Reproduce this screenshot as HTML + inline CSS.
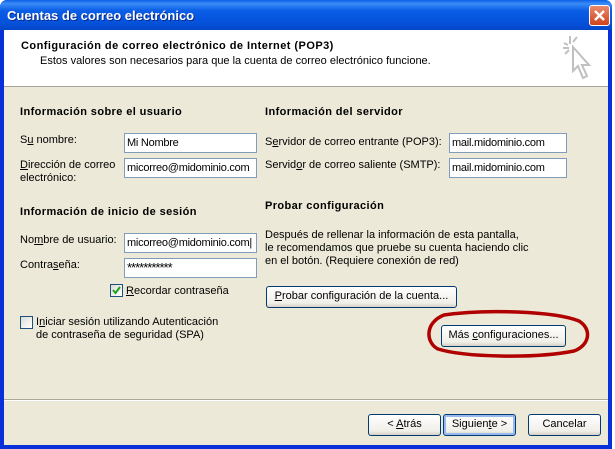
<!DOCTYPE html>
<html><head><meta charset="utf-8"><style>
*{margin:0;padding:0;box-sizing:border-box}
body{width:615px;height:449px;overflow:hidden;background:#fff;font-family:"Liberation Sans",sans-serif;font-size:11px;color:#000;position:relative}
.a{position:absolute;white-space:nowrap;line-height:13px}
.b{font-weight:bold;letter-spacing:0.4px}
.win{position:absolute;left:0;top:0;width:612px;height:449px;background:#0831d9;border-radius:7px 7px 0 0}
.title{position:absolute;left:0;top:0;width:612px;height:30px;border-radius:7px 7px 0 0;background:linear-gradient(#0a5fe8 0%,#3b8cf7 12%,#0b5ee6 35%,#0654de 70%,#0447c8 100%)}
.body{position:absolute;left:4px;top:30px;width:604px;height:415px;background:#ece9d8}
.hdr{position:absolute;left:4px;top:30px;width:604px;height:57px;background:#fff;border-bottom:1px solid #a6a39a}
.in{position:absolute;height:20px;background:#fff;border:1px solid #7f9db9;padding:3px 0 0 2px;line-height:13px;font-size:11px;letter-spacing:-0.25px;white-space:nowrap;overflow:hidden}
.btn{position:absolute;height:22px;border:1px solid #003c74;border-radius:3px;background:linear-gradient(#fff,#f0efe8 80%,#d6d0c5);text-align:center;line-height:19px}
.cb{position:absolute;width:13px;height:13px;border:1px solid #1c5180;background:linear-gradient(135deg,#dcdcd6,#fff)}
u{text-decoration:underline}
</style></head><body>
<div class="win"></div>
<div class="title"></div>
<div class="a" style="left:7px;top:9px;font-size:13px;font-weight:bold;color:#fff;text-shadow:1px 1px #0a2a8a">Cuentas de correo electrónico</div>
<div style="position:absolute;left:589px;top:5px;width:21px;height:21px;border:1px solid #fff;border-radius:3px;background:linear-gradient(#e98a6c,#d0431c)"><svg width="19" height="19" style="position:absolute;left:0;top:0"><path d="M5 5L14 14M14 5L5 14" stroke="#fff" stroke-width="2.4"/></svg></div>
<div class="body"></div>
<div class="hdr"></div>
<div class="a b" style="left:21px;top:40px;letter-spacing:0.45px">Configuración de correo electrónico de Internet (POP3)</div>
<div class="a" style="left:40px;top:55px">Estos valores son necesarios para que la cuenta de correo electrónico funcione.</div>
<svg style="position:absolute;left:562px;top:34px" width="32" height="50"><g stroke="#c0c0c0" stroke-width="2" fill="none"><path d="M8 2V10M2 9L6 11M15 3L11 8M1 14H7M3 20L7 16"/><path d="M11 13L11 37L16 32L21 44L25 42L20 31L27 31Z" fill="#fff"/></g></svg>

<div class="a b" style="left:20px;top:106px">Información sobre el usuario</div>
<div class="a" style="left:20px;top:134px">S<u>u</u> nombre:</div>
<div class="in" style="left:124px;top:133px;width:133px">Mi Nombre</div>
<div class="a" style="left:20px;top:159px"><u>D</u>irección de correo<br>electrónico:</div>
<div class="in" style="left:124px;top:158px;width:133px">micorreo@midominio.com</div>
<div class="a b" style="left:20px;top:206px">Información de inicio de sesión</div>
<div class="a" style="left:20px;top:234px">No<u>m</u>bre de usuario:</div>
<div class="in" style="left:124px;top:233px;width:133px">micorreo@midominio.com|</div>
<div class="a" style="left:20px;top:259px">Contra<u>s</u>eña:</div>
<div class="in" style="left:124px;top:258px;width:133px;font-size:13px;letter-spacing:-1px;padding-top:2px">***********</div>
<div class="cb" style="left:110px;top:284px"><svg width="11" height="11"><path d="M2 5L4.5 8L9 2" stroke="#21a121" stroke-width="2" fill="none"/></svg></div>
<div class="a" style="left:126px;top:285px"><u>R</u>ecordar contraseña</div>
<div class="cb" style="left:20px;top:316px"></div>
<div class="a" style="left:36px;top:316px">I<u>n</u>iciar sesión utilizando Autenticación<br>de contraseña de seguridad (SPA)</div>

<div class="a b" style="left:265px;top:106px">Información del servidor</div>
<div class="a" style="left:265px;top:136px">S<u>e</u>rvidor de correo entrante (POP3):</div>
<div class="in" style="left:449px;top:133px;width:118px">mail.midominio.com</div>
<div class="a" style="left:265px;top:159px">Servid<u>o</u>r de correo saliente (SMTP):</div>
<div class="in" style="left:449px;top:158px;width:118px">mail.midominio.com</div>
<div class="a b" style="left:265px;top:200px">Probar configuración</div>
<div class="a" style="left:265px;top:229px">Después de rellenar la información de esta pantalla,<br>le recomendamos que pruebe su cuenta haciendo clic<br>en el botón. (Requiere conexión de red)</div>
<div class="btn" style="left:266px;top:286px;width:191px"><u>P</u>robar configuración de la cuenta...</div>
<div class="btn" style="left:441px;top:325px;width:125px">Más <u>c</u>onfiguraciones...</div>
<svg style="position:absolute;left:424px;top:309px" width="170" height="50"><path d="M20 6C60 0 130 2 155 12C168 20 166 36 150 42C110 50 40 48 14 40C2 34 0 14 20 6Z" stroke="#b00000" stroke-width="3.5" fill="none"/></svg>

<div style="position:absolute;left:4px;top:399px;width:604px;height:2px;border-top:1px solid #aca899;border-bottom:1px solid #fff"></div>
<div class="btn" style="left:368px;top:414px;width:73px">&lt; <u>A</u>trás</div>
<div class="btn" style="left:443px;top:414px;width:73px;box-shadow:inset 0 0 0 2px #99b9ee">Siguien<u>t</u>e &gt;</div>
<div class="btn" style="left:528px;top:414px;width:73px">Cancelar</div>
</body></html>
